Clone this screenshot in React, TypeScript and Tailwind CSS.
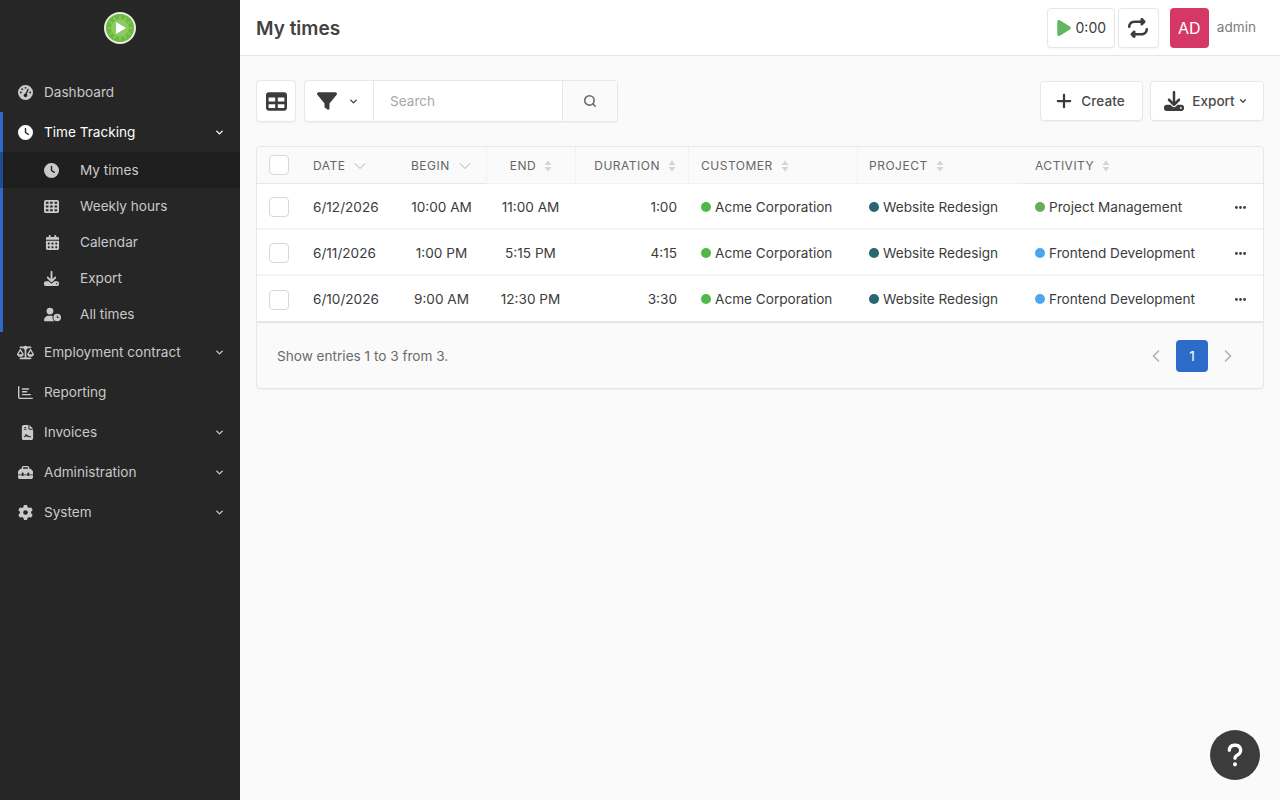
import type { ReactNode } from "react";
import {
  FaGaugeHigh,
  FaClock,
  FaCalendarDays,
  FaDownload,
  FaUserClock,
  FaScaleBalanced,
  FaRegChartBar,
  FaFileContract,
  FaToolbox,
  FaGear,
  FaFilter,
  FaPlay,
  FaPlus,
  FaEllipsis,
  FaQuestion,
  FaRepeat,
  FaTableCells,
  FaTable,
} from "react-icons/fa6";
import { LuChevronDown, LuChevronLeft, LuChevronRight, LuSearch } from "react-icons/lu";

function Logo() {
  const ticks = [0, 30, 60, 90, 120, 150, 180, 210, 240, 270, 300, 330];
  return (
    <svg width="32" height="32" viewBox="0 0 32 32">
      <circle cx="16" cy="16" r="15" fill="#6cb93f" stroke="#e4efe0" strokeWidth="2" />
      <circle cx="16" cy="16" r="9" fill="#8ccb60" />
      {ticks.map((a) => (
        <rect key={a} x="15.6" y="4" width="0.8" height="2.4" fill="#b6dc9c" transform={`rotate(${a} 16 16)`} />
      ))}
      <path d="M12 10 L22 16 L12 22 Z" fill="#fff" />
    </svg>
  );
}

function NavItem({ icon, label, chevron, active }: { icon: ReactNode; label: string; chevron?: boolean; active?: boolean }) {
  return (
    <div className={`flex h-10 items-center pr-[15px] text-[13.6px] ${active ? "pl-[15px] text-white" : "pl-[18px] text-[#c9c9c9]"}`}>
      <span className="flex w-[26px] items-center text-[15px]">{icon}</span>
      <span className="flex-1">{label}</span>
      {chevron && <LuChevronDown size={11} strokeWidth={3} />}
    </div>
  );
}

function SubItem({ icon, label, active }: { icon: ReactNode; label: string; active?: boolean }) {
  return (
    <div
      className={`-ml-[3px] flex h-9 items-center text-[13.6px] text-[#c9c9c9] ${
        active ? "border-l-[3px] border-[#1f4d94] bg-[#1e1e1e] pl-[41px]" : "pl-[44px]"
      }`}
    >
      <span className="flex w-[36px] items-center text-[15px]">{icon}</span>
      <span>{label}</span>
    </div>
  );
}

function Sidebar() {
  return (
    <aside className="flex w-[240px] shrink-0 flex-col bg-[#262626]">
      <div className="flex h-14 items-center justify-center">
        <Logo />
      </div>
      <nav className="mt-4">
        <NavItem icon={<FaGaugeHigh />} label="Dashboard" />
        <div className="border-l-[3px] border-[#2d6bc9]">
          <NavItem icon={<FaClock />} label="Time Tracking" chevron active />
          <SubItem icon={<FaClock />} label="My times" active />
          <SubItem icon={<FaTableCells />} label="Weekly hours" />
          <SubItem icon={<FaCalendarDays className="ml-[1px]" />} label="Calendar" />
          <SubItem icon={<FaDownload />} label="Export" />
          <SubItem icon={<FaUserClock className="text-[17px]" />} label="All times" />
        </div>
        <NavItem icon={<FaScaleBalanced className="-ml-[1px] text-[17px]" />} label="Employment contract" chevron />
        <NavItem icon={<FaRegChartBar />} label="Reporting" />
        <NavItem icon={<FaFileContract className="ml-[2px]" />} label="Invoices" chevron />
        <NavItem icon={<FaToolbox />} label="Administration" chevron />
        <NavItem icon={<FaGear />} label="System" chevron />
      </nav>
    </aside>
  );
}

function Header() {
  return (
    <header className="flex h-14 items-center justify-between border-b border-[#e6e6e6] bg-white pl-4 pr-6">
      <h1 className="pt-1 text-[19px] font-semibold text-[#424242]">My times</h1>
      <div className="flex items-center">
        <button className="flex h-10 w-[68px] items-center justify-center gap-[3px] rounded border border-[#e6e7e9] bg-white pr-px text-sm text-[#3c3c3c] shadow-[0_1px_1px_rgba(0,0,0,0.04)]">
          <FaPlay className="text-[18px] text-[#5eb95e]" />
          0:00
        </button>
        <button className="ml-[3px] flex h-10 w-[41px] items-center justify-center rounded border border-[#e6e7e9] bg-white text-[20px] text-[#3c3c3c] shadow-[0_1px_1px_rgba(0,0,0,0.04)]">
          <FaRepeat />
        </button>
        <div className="ml-[11px] flex h-10 w-[39px] items-center justify-center rounded bg-[#d63865] text-base text-white">AD</div>
        <span className="ml-2 text-[13.6px] text-[#7b7b7b]">admin</span>
      </div>
    </header>
  );
}

function Toolbar() {
  return (
    <div className="flex h-[42px] items-center">
      <button className="flex h-[42px] w-10 items-center justify-center rounded border border-[#e6e7e9] bg-white text-[21px] text-[#3c3c3c] shadow-[0_1px_1px_rgba(0,0,0,0.04)]">
        <FaTable />
      </button>
      <div className="ml-2 flex h-[42px] overflow-hidden rounded border border-[#e6e7e9] bg-white shadow-[0_1px_1px_rgba(0,0,0,0.04)]">
        <div className="flex w-[68px] items-center gap-[11px] pl-3 text-[#3c3c3c]">
          <FaFilter className="text-[20px]" />
          <LuChevronDown size={11} strokeWidth={3} />
        </div>
        <input
          placeholder="Search"
          className="w-[189px] border-l border-[#e6e7e9] px-4 text-[13.6px] outline-none placeholder:text-[#a8a8a8]"
        />
        <div className="flex w-[55px] items-center justify-center border-l border-[#e6e7e9] bg-[#fafafa] text-[#6b6b6b]">
          <LuSearch size={14} strokeWidth={2.75} />
        </div>
      </div>
      <div className="ml-auto flex items-center gap-[7px]">
        <button className="flex h-10 w-[103px] items-center justify-center gap-2 rounded border border-[#e6e7e9] bg-white pr-[3px] text-[13.6px] font-medium text-[#4a4a4a] shadow-[0_1px_1px_rgba(0,0,0,0.04)]">
          <FaPlus className="text-[18px] text-[#3c3c3c]" />
          Create
        </button>
        <button className="flex h-10 w-[114px] items-center justify-center gap-2 rounded border border-[#e6e7e9] bg-white pr-[2px] text-[13.6px] font-medium text-[#4a4a4a] shadow-[0_1px_1px_rgba(0,0,0,0.04)]">
          <FaDownload className="text-[20px] text-[#3c3c3c]" />
          <span className="flex items-center gap-[3px]">
            Export
            <LuChevronDown size={10} strokeWidth={3} />
          </span>
        </button>
      </div>
    </div>
  );
}

function SortIcon() {
  return (
    <svg width="8" height="12" viewBox="0 0 8 12" className="ml-2 shrink-0">
      <path d="M4 0.5 L7.5 5 H0.5 Z M4 11.5 L0.5 7 H7.5 Z" fill="#d4d4d4" />
    </svg>
  );
}

function SortedIcon() {
  return <LuChevronDown size={20} strokeWidth={1.1} className="ml-[5px] shrink-0 text-[#a8a8a8]" />;
}

function Checkbox() {
  return <span className="block h-5 w-5 rounded border border-[#d5d8de] bg-white" />;
}

function Dot({ color }: { color: string }) {
  return <span className={`mr-1 inline-block h-2.5 w-2.5 rounded-full ${color}`} />;
}

const rows = [
  { date: "6/12/2026", begin: "10:00 AM", end: "11:00 AM", duration: "1:00", activity: "Project Management", dot: "bg-[#66ad5a]" },
  { date: "6/11/2026", begin: "1:00 PM", end: "5:15 PM", duration: "4:15", activity: "Frontend Development", dot: "bg-[#4da6ee]" },
  { date: "6/10/2026", begin: "9:00 AM", end: "12:30 PM", duration: "3:30", activity: "Frontend Development", dot: "bg-[#4da6ee]" },
];

function Th({ children, className = "" }: { children: ReactNode; className?: string }) {
  return (
    <th className={`h-[37px] border-b border-[#e6e7e9] py-0 pr-3 pt-px text-xs font-normal tracking-[0.5px] text-[#666666] ${className}`}>
      <span className="flex items-center">{children}</span>
    </th>
  );
}

function TimesTable() {
  return (
    <div className="mt-6 rounded border border-[#e6e7e9] bg-[#fafafa] shadow-[0_1px_1px_rgba(0,0,0,0.04)]">
      <table className="w-full table-fixed border-separate border-spacing-0 text-left">
        <colgroup>
          <col className="w-[44px]" />
          <col className="w-[98px]" />
          <col className="w-[87px]" />
          <col className="w-[89px]" />
          <col className="w-[113px]" />
          <col className="w-[169px]" />
          <col className="w-[166px]" />
          <col />
          <col className="w-[43px]" />
        </colgroup>
        <thead>
          <tr>
            <th className="h-[37px] border-b border-[#e6e7e9] p-0 pl-3">
              <Checkbox />
            </th>
            <Th className="pl-3">DATE<SortedIcon /></Th>
            <Th className="pl-3">BEGIN<SortedIcon /></Th>
            <Th className="border-l border-[#f1f1f1] pl-3">
              <span className="flex w-full items-center justify-center">END<SortIcon /></span>
            </Th>
            <Th className="border-l border-[#f1f1f1] pl-3">
              <span className="flex w-full items-center justify-end">DURATION<SortIcon /></span>
            </Th>
            <Th className="border-l border-[#f1f1f1] pl-3">CUSTOMER<SortIcon /></Th>
            <Th className="border-l border-[#f1f1f1] pl-[11px]">PROJECT<SortIcon /></Th>
            <Th className="pl-3">ACTIVITY<SortIcon /></Th>
            <th className="border-b border-[#e6e7e9]" />
          </tr>
        </thead>
        <tbody className="bg-white text-[13.6px] text-[#3c3c3c]">
          {rows.map((r, i) => {
            const last = i === rows.length - 1;
            const line = `pt-[2px] ${last ? "border-b-2 border-[#e4e5e8]" : "border-b-2 border-[#f3f3f3]"}`;
            return (
              <tr key={r.date} className={last ? "h-[47px]" : "h-[46px]"}>
                <td className={`pl-3 ${line}`}><Checkbox /></td>
                <td className={`px-3 ${line}`}>{r.date}</td>
                <td className={`pr-[2px] text-center ${line}`}>{r.begin}</td>
                <td className={`text-center ${line}`}>{r.end}</td>
                <td className={`pl-3 pr-[11px] text-right ${line}`}>{r.duration}</td>
                <td className={`pl-[13px] pr-3 whitespace-nowrap ${line}`}><Dot color="bg-[#4fb848]" />Acme Corporation</td>
                <td className={`px-3 whitespace-nowrap ${line}`}><Dot color="bg-[#2a6670]" />Website Redesign</td>
                <td className={`px-3 whitespace-nowrap ${line}`}><Dot color={r.dot} />{r.activity}</td>
                <td className={`pr-4 text-right text-[#3c3c3c] ${line}`}>
                  <FaEllipsis className="ml-auto text-[13px]" />
                </td>
              </tr>
            );
          })}
        </tbody>
      </table>
      <div className="flex h-[65px] items-center justify-between pl-5 pr-[25px] pt-px text-[13.6px] text-[#6b6b6b]">
        <span>Show entries 1 to 3 from 3.</span>
        <div className="flex items-center text-[#b0b0b0]">
          <LuChevronLeft size={20} strokeWidth={2} />
          <span className="mx-[10px] flex h-8 w-8 items-center justify-center rounded bg-[#2d6bc9] text-[13.6px] text-white">1</span>
          <LuChevronRight size={20} strokeWidth={2} />
        </div>
      </div>
    </div>
  );
}

export default function App() {
  return (
    <div className="flex min-h-screen bg-[#fafafa] text-[#3c3c3c] [font-family:Inter,sans-serif]">
      <Sidebar />
      <main className="min-w-0 flex-1">
        <Header />
        <div className="px-4 pt-6">
          <Toolbar />
          <TimesTable />
        </div>
      </main>
      <button className="fixed bottom-5 right-5 flex h-[50px] w-[50px] items-center justify-center rounded-full bg-[#3c3c3c] text-[26px] text-white">
        <FaQuestion />
      </button>
    </div>
  );
}
